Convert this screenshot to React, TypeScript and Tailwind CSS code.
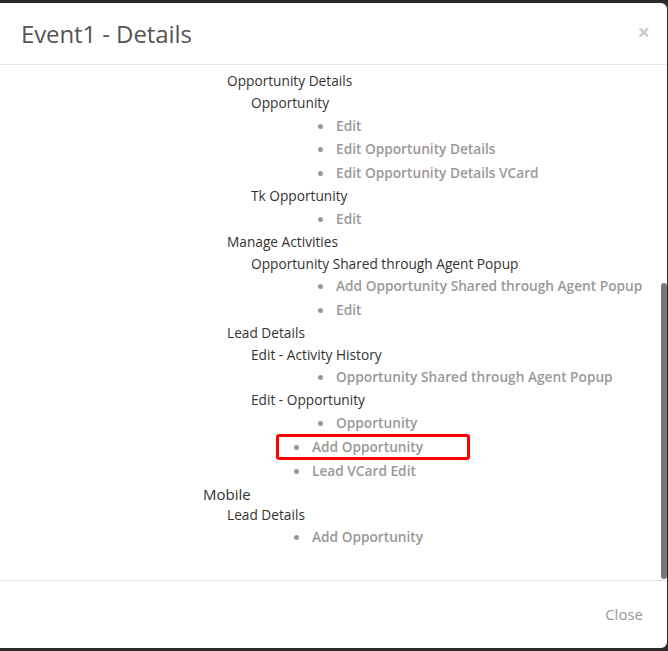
import React from "react";

type Row = { t: string; kind: "l1" | "l2" | "l3" | "b4" | "b3"; h: number; boxed?: boolean };

const rows: Row[] = [
  { t: "Opportunity Details", kind: "l2", h: 22 },
  { t: "Opportunity", kind: "l3", h: 22 },
  { t: "Edit", kind: "b4", h: 24 },
  { t: "Edit Opportunity Details", kind: "b4", h: 23 },
  { t: "Edit Opportunity Details VCard", kind: "b4", h: 24 },
  { t: "Tk Opportunity", kind: "l3", h: 22 },
  { t: "Edit", kind: "b4", h: 24 },
  { t: "Manage Activities", kind: "l2", h: 22 },
  { t: "Opportunity Shared through Agent Popup", kind: "l3", h: 22 },
  { t: "Add Opportunity Shared through Agent Popup", kind: "b4", h: 23 },
  { t: "Edit", kind: "b4", h: 24 },
  { t: "Lead Details", kind: "l2", h: 22 },
  { t: "Edit - Activity History", kind: "l3", h: 22 },
  { t: "Opportunity Shared through Agent Popup", kind: "b4", h: 23 },
  { t: "Edit - Opportunity", kind: "l3", h: 22 },
  { t: "Opportunity", kind: "b4", h: 24 },
  { t: "Add Opportunity", kind: "b3", h: 24, boxed: true },
  { t: "Lead VCard Edit", kind: "b3", h: 24 },
  { t: "Mobile", kind: "l1", h: 22 },
  { t: "Lead Details", kind: "l2", h: 21 },
  { t: "Add Opportunity", kind: "b3", h: 22 },
];

function RowView({ r }: { r: Row }) {
  const style = { height: r.h };
  if (r.kind === "l1")
    return (
      <div style={style} className="flex items-center pl-[203px] text-[15px] text-[#333]">
        {r.t}
      </div>
    );
  if (r.kind === "l2")
    return (
      <div style={style} className="flex items-center pl-[227px] text-[13.7px] text-[#333]">
        {r.t}
      </div>
    );
  if (r.kind === "l3")
    return (
      <div style={style} className="flex items-center pl-[251px] text-[13.7px] text-[#333]">
        {r.t}
      </div>
    );
  const pad = r.kind === "b4" ? "pl-[318px]" : "pl-[294px]";
  return (
    <div style={style} className={`flex items-center ${pad} relative`}>
      {r.boxed && (
        <div className="absolute left-[276px] top-[-1px] w-[194px] h-[26px] border-[3px] border-[#ff0000] rounded-[3px]" />
      )}
      <span className="w-[5px] h-[5px] rounded-full bg-[#999] mr-[13px]" />
      <span className="text-[13.7px] font-semibold text-[#999]">{r.t}</span>
    </div>
  );
}

export default function App() {
  return (
    <div
      className="w-[668px] h-[651px] bg-[#2a2a2a] overflow-hidden relative pt-[3px]"
      style={{ fontFamily: '"Open Sans", "Noto Sans", sans-serif' }}
    >
      <div className="ml-[-6px] w-[673px] h-[645px] bg-white rounded-[6px] flex flex-col relative">
        <div className="h-[62px] border-b border-[#e5e5e5] flex items-center justify-between pl-[27px] pr-[17px] shrink-0">
          <div className="text-[24px] text-[#555] tracking-[-0.1px]">Event1 - Details</div>
          <div className="text-[22px] font-bold text-[#cccccc] leading-none mt-[-6px]">×</div>
        </div>
        <div className="flex-1 pt-[5px] ml-[6px] relative">
          {rows.map((r, i) => (
            <RowView key={i} r={r} />
          ))}
          <div className="absolute right-[0px] top-[218px] w-[6px] h-[296px] rounded-full bg-[#787878]" />
        </div>
        <div className="h-[68px] border-t border-[#e5e5e5] flex items-center justify-end pr-[24px] shrink-0">
          <span className="text-[15px] text-[#999]">Close</span>
        </div>
      </div>
    </div>
  );
}
